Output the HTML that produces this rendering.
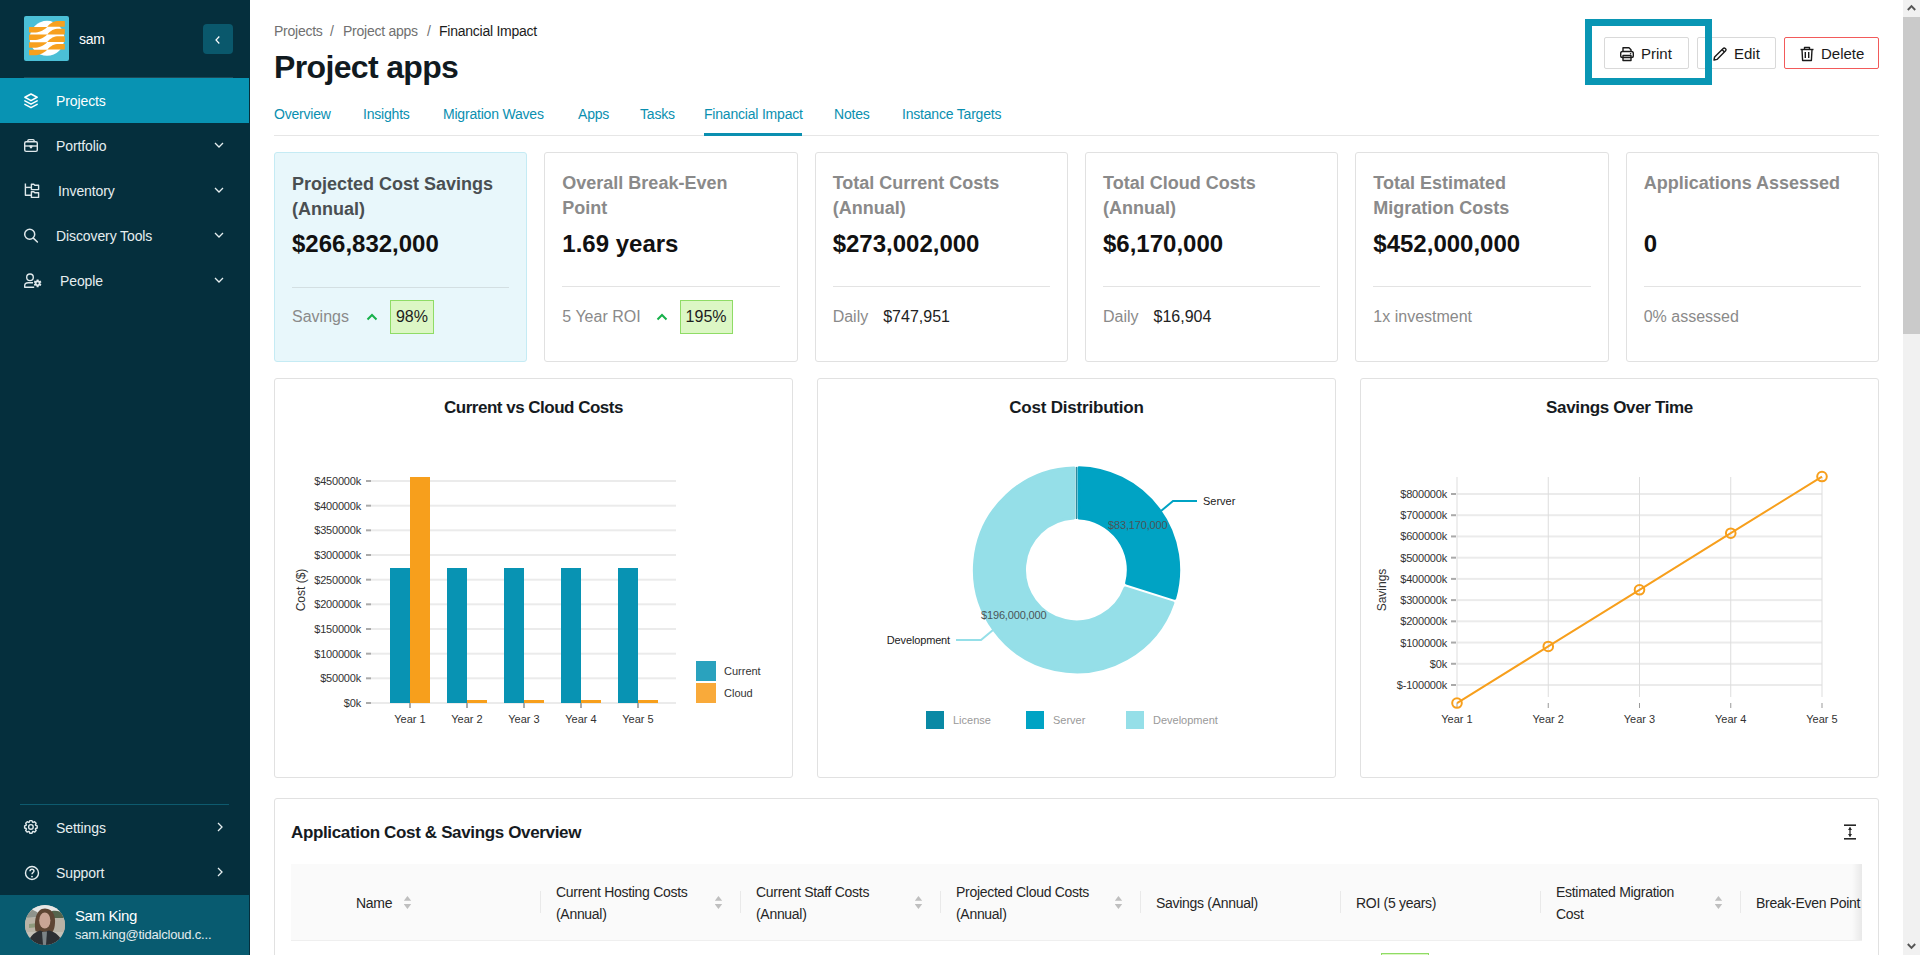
<!DOCTYPE html>
<html><head><meta charset="utf-8">
<style>
*{box-sizing:border-box;margin:0;padding:0}
html,body{width:1920px;height:955px;overflow:hidden;background:#fff;font-family:"Liberation Sans",sans-serif;color:#161b1f}
.abs{position:absolute}
#side{position:absolute;left:0;top:0;width:250px;height:955px;background:#052f3d}
.nav{position:absolute;left:0;width:249px;height:45px;color:#e6eef0;font-size:14px;letter-spacing:-0.1px}
.nav .t{position:absolute;left:56px;top:15px;white-space:nowrap}
.nav svg.ic{position:absolute;left:24px;top:15px}
.nav svg.ch{position:absolute;left:213px;top:18px}
#main{position:absolute;left:250px;top:0;width:1653px;height:955px}
.card{position:absolute;top:152px;height:210px;border:1px solid #e1e1e1;border-radius:3px;background:#fff}
.card .h{position:absolute;left:17px;top:18px;font-size:18px;font-weight:bold;color:#8a8a8a;line-height:25px}
.card .v{position:absolute;left:17px;top:76px;font-size:24px;font-weight:bold;color:#111;line-height:30px}
.card .hr{position:absolute;left:17px;right:17px;top:133px;height:1px;background:#e3e3e3}
.card .f{position:absolute;left:17px;top:147px;height:34px;display:flex;align-items:center;font-size:16px;color:#8a8a8a;white-space:nowrap}
.card .f b{font-weight:normal;color:#222}
.badge{display:inline-block;background:#dcf7c5;border:1px solid #8fdc66;color:#1d1d1d;padding:0 5px;line-height:32px}
.th{font-size:14px;line-height:22px;color:#262626;white-space:nowrap;letter-spacing:-0.3px}
.chart{position:absolute;top:378px;width:519px;height:400px;border:1px solid #e1e1e1;border-radius:3px;background:#fff}
.chart .ttl{position:absolute;left:0;right:0;top:19px;text-align:center;font-weight:bold;font-size:17px;color:#161b1f;letter-spacing:-0.5px}
#scroll{position:absolute;left:1903px;top:0;width:17px;height:955px;background:#f1f1f1}
</style></head>
<body>
<div id="side">
  <!-- logo -->
  <div class="abs" style="left:24px;top:16px;width:45px;height:45px;background:#4bbfd6;border-radius:2px;overflow:hidden">
    <svg width="45" height="45" viewBox="0 0 45 45"><ellipse cx="23" cy="22.3" rx="17.3" ry="17.5" fill="#fff"/><g fill="#f7a01e"><path d="M5 11.0 L23.2 11.0 C19 15.0 15 16.5 10 16.5 L5 16.5 Z"/><path d="M23.2 10.8 L40.8 10.8 L40.8 5.1 L35 5.1 C29.5 5.1 27 6.8 23.2 10.8 Z"/><path d="M5 18.6 L23.2 18.6 C19 22.6 15 24.1 10 24.1 L5 24.1 Z"/><path d="M23.2 18.4 L40.8 18.4 L40.8 12.7 L35 12.7 C29.5 12.7 27 14.4 23.2 18.4 Z"/><path d="M5 26.2 L23.2 26.2 C19 30.2 15 31.7 10 31.7 L5 31.7 Z"/><path d="M23.2 26.0 L40.8 26.0 L40.8 20.3 L35 20.3 C29.5 20.3 27 22.0 23.2 26.0 Z"/><path d="M5 33.8 L23.2 33.8 C19 37.8 15 39.3 10 39.3 L5 39.3 Z"/><path d="M23.2 33.6 L40.8 33.6 L40.8 27.9 L35 27.9 C29.5 27.9 27 29.6 23.2 33.6 Z"/></g></svg>
  </div>
  <div class="abs" style="left:79px;top:31px;font-size:14px;color:#fff;letter-spacing:-0.3px">sam</div>
  <div class="abs" style="left:203px;top:24px;width:30px;height:30px;border-radius:4px;background:#0a586c">
    <svg class="abs" style="left:10px;top:11px" width="10" height="10" viewBox="0 0 10 10"><path d="M6.3 1.5 L3 5 L6.3 8.5" stroke="#fff" stroke-width="1.2" fill="none"/></svg>
  </div>
  <div class="abs" style="left:24px;top:77px;width:209px;height:1px;background:#1d4a58"></div>

  <svg class="abs" style="z-index:2;left:20px;top:88px" width="24" height="24" viewBox="20 88 24 24"><g fill="none" stroke="#fff" stroke-width="1.6" stroke-linejoin="round" stroke-linecap="round"><path d="M24.9 97.3 L31 94 L37.1 97.3 L31 100.6 Z"/><path d="M24.9 100.9 L31 104.1 L37.1 100.9"/><path d="M24.9 104.4 L31 107.6 L37.1 104.4"/></g></svg>
  <div class="nav" style="top:78px;background:#0893b3;color:#fff"><span class="t">Projects</span></div>
  <svg class="abs" style="z-index:2;left:20px;top:133px" width="24" height="24" viewBox="20 133 24 24"><g fill="none" stroke="#dfe8eb" stroke-width="1.4" stroke-linejoin="round"><path d="M27.9 141.8 V140.6 C27.9 140 28.3 139.6 28.9 139.6 H33.1 C33.7 139.6 34.1 140 34.1 140.6 V141.8"/><rect x="24.7" y="141.8" width="12.6" height="9.6" rx="1.4"/><path d="M24.7 146 H37.3"/></g><path d="M29.4 145.6 H32.6 C32.6 147.6 31.8 148.4 31 148.4 C30.2 148.4 29.4 147.6 29.4 145.6 Z" fill="#dfe8eb"/></svg>
  <div class="nav" style="top:123px"><span class="t">Portfolio</span><svg class="ch" width="12" height="8" viewBox="0 0 12 8"><path d="M2 2 L6 6 L10 2" stroke="#e6eef0" stroke-width="1.3" fill="none"/></svg></div>
  <svg class="abs" style="z-index:2;left:20px;top:178px" width="24" height="24" viewBox="20 178 24 24"><g fill="none" stroke="#dfe8eb" stroke-width="1.4" stroke-linejoin="round"><path d="M25.4 183.6 V195.3 H31"/><path d="M25.4 187.4 H31"/><path d="M31.4 184.3 H33.8 L34.8 185.3 H38.6 V189.6 H31.4 Z"/><path d="M31.4 191.7 H33.8 L34.8 192.7 H38.6 V197.4 H31.4 Z"/></g></svg>
  <div class="nav" style="top:168px"><span class="t" style="left:58px">Inventory</span><svg class="ch" width="12" height="8" viewBox="0 0 12 8"><path d="M2 2 L6 6 L10 2" stroke="#e6eef0" stroke-width="1.3" fill="none"/></svg></div>
  <svg class="abs" style="z-index:2;left:20px;top:223px" width="24" height="24" viewBox="20 223 24 24"><g fill="none" stroke="#dfe8eb" stroke-width="1.5" stroke-linecap="round"><circle cx="29.7" cy="234.3" r="5"/><path d="M33.6 238.4 L37.4 242"/></g></svg>
  <div class="nav" style="top:213px"><span class="t">Discovery Tools</span><svg class="ch" width="12" height="8" viewBox="0 0 12 8"><path d="M2 2 L6 6 L10 2" stroke="#e6eef0" stroke-width="1.3" fill="none"/></svg></div>
  <svg class="abs" style="z-index:2;left:20px;top:268px" width="26" height="24" viewBox="20 268 26 24"><g fill="none" stroke="#dfe8eb" stroke-width="1.4" stroke-linejoin="round"><circle cx="30" cy="277.3" r="3.3"/><path d="M33 282.8 H28.2 C26 282.8 24.7 284.2 24.7 285.8 V287.3 H34.2"/></g><path d="M36.51 280.61 L36.63 279.42 L38.57 279.42 L38.69 280.61 L39.39 281.01 L40.48 280.52 L41.45 282.20 L40.47 282.90 L40.47 283.70 L41.45 284.40 L40.48 286.08 L39.39 285.59 L38.69 285.99 L38.57 287.18 L36.63 287.18 L36.51 285.99 L35.81 285.59 L34.72 286.08 L33.75 284.40 L34.73 283.70 L34.73 282.90 L33.75 282.20 L34.72 280.52 L35.81 281.01 Z" fill="#dfe8eb"/><circle cx="37.6" cy="283.3" r="1.1" fill="#052f3d"/></svg>
  <div class="nav" style="top:258px"><span class="t" style="left:60px">People</span><svg class="ch" width="12" height="8" viewBox="0 0 12 8"><path d="M2 2 L6 6 L10 2" stroke="#e6eef0" stroke-width="1.3" fill="none"/></svg></div>

  <div class="abs" style="left:20px;top:804px;width:209px;height:1px;background:#0d5a6e"></div>
  <svg class="abs" style="z-index:2;left:20px;top:815px" width="24" height="24" viewBox="20 815 24 24"><g fill="none" stroke="#dfe8eb" stroke-width="1.4" stroke-linejoin="round"><path d="M29.27 822.17 L29.79 820.60 L32.01 820.60 L32.53 822.17 L33.09 822.41 L34.57 821.66 L36.14 823.23 L35.39 824.71 L35.63 825.27 L37.20 825.79 L37.20 828.01 L35.63 828.53 L35.39 829.09 L36.14 830.57 L34.57 832.14 L33.09 831.39 L32.53 831.63 L32.01 833.20 L29.79 833.20 L29.27 831.63 L28.71 831.39 L27.23 832.14 L25.66 830.57 L26.41 829.09 L26.17 828.53 L24.60 828.01 L24.60 825.79 L26.17 825.27 L26.41 824.71 L25.66 823.23 L27.23 821.66 L28.71 822.41 Z"/><circle cx="30.9" cy="826.9" r="2.3"/></g></svg>
  <div class="nav" style="top:805px"><span class="t">Settings</span><svg class="ch" style="left:216px;top:16px" width="8" height="12" viewBox="0 0 8 12"><path d="M2 2 L6 6 L2 10" stroke="#e6eef0" stroke-width="1.3" fill="none"/></svg></div>
  <div class="nav" style="top:850px"><svg class="ic" width="16" height="16" viewBox="0 0 16 16"><g fill="none" stroke="#e6eef0" stroke-width="1.4"><circle cx="8" cy="8" r="6.5"/><path d="M6 6.2 C6 4.8 7 4.2 8 4.2 C9.2 4.2 10 5 10 6 C10 7.4 8 7.6 8 9.2"/></g><circle cx="8" cy="11.6" r="0.9" fill="#e6eef0"/></svg><span class="t">Support</span><svg class="ch" style="left:216px;top:16px" width="8" height="12" viewBox="0 0 8 12"><path d="M2 2 L6 6 L2 10" stroke="#e6eef0" stroke-width="1.3" fill="none"/></svg></div>

  <div class="abs" style="left:0;top:895px;width:249px;height:60px;background:#085b70">
    <svg class="abs" style="left:25px;top:10px" width="40" height="40" viewBox="0 0 40 40"><defs><clipPath id="av"><circle cx="20" cy="20" r="20"/></clipPath></defs><g clip-path="url(#av)">
<rect width="40" height="40" fill="#c4c0b6"/>
<rect width="40" height="7" fill="#e6e7e6"/>
<path d="M0 6 L6 4 L12 7 L12 12 L0 13 Z" fill="#8f948c"/>
<path d="M27 6 C31 5 35 6 40 9 L40 13 L27 13 Z" fill="#55654d"/>
<rect y="13" width="40" height="14" fill="#b9b3a6"/>
<path d="M4 19 L14 18 L14 22 L4 23 Z" fill="#8e9a7c"/>
<path d="M10.5 26 C9 17 10.5 3.5 20 3.5 C28.5 3.5 30.5 12 30 18 C29.8 22 29 25 27.5 27 L13 27 Z" fill="#5e4634"/>
<ellipse cx="19.8" cy="15.5" rx="5.6" ry="8" fill="#c9a595"/>
<path d="M14 9 C16 6 23 6 25.5 9.5 L25.5 7 C23 4.5 16 4.5 13.5 8 Z" fill="#5e4634"/>
<path d="M3 40 C4 32 8 28 15 25.5 L19 27 L24 25.5 C31 27.5 36 31 38 40 Z" fill="#2c2f33"/>
<path d="M17 27 L22 26.5 L21 40 L18 40 Z" fill="#7b8386"/>
</g></svg>
    <div class="abs" style="left:75px;top:12px;font-size:15px;color:#fff;letter-spacing:-0.4px">Sam King</div>
    <div class="abs" style="left:75px;top:32px;font-size:13px;color:#e3ecef;letter-spacing:-0.2px">sam.king@tidalcloud.c...</div>
  </div>
</div>


<div id="main">
  <div class="abs" style="left:0;top:0;font-size:14px;color:#707070;white-space:nowrap;letter-spacing:-0.25px">
    <span class="abs" style="left:24px;top:23px">Projects</span>
    <span class="abs" style="left:80px;top:23px">/</span>
    <span class="abs" style="left:93px;top:23px">Project apps</span>
    <span class="abs" style="left:177px;top:23px">/</span>
    <span class="abs" style="left:189px;top:23px;color:#1c1c1c">Financial Impact</span>
  </div>
  <div class="abs" style="left:24px;top:49px;font-size:32px;font-weight:bold;color:#111a1f;white-space:nowrap;letter-spacing:-0.65px">Project apps</div>
  <div class="abs tabs" style="left:0;top:106px;font-size:14px;color:#0a8fb0;white-space:nowrap;letter-spacing:-0.2px">
    <span class="abs" style="left:24px">Overview</span>
    <span class="abs" style="left:113px">Insights</span>
    <span class="abs" style="left:193px">Migration Waves</span>
    <span class="abs" style="left:328px">Apps</span>
    <span class="abs" style="left:390px">Tasks</span>
    <span class="abs" style="left:454px">Financial Impact</span>
    <span class="abs" style="left:584px">Notes</span>
    <span class="abs" style="left:652px">Instance Targets</span>
  </div>
  <div class="abs" style="left:24px;top:135px;width:1605px;height:1px;background:#e6e6e6"></div>
  <div class="abs" style="left:454px;top:133px;width:98px;height:3px;background:#0a8fb0"></div>

  <!-- buttons -->
    <div class="abs btn" style="left:1354px;top:37px;width:85px;height:32px;border:1px solid #d9d9d9;border-radius:2px;background:#fff">
    <svg class="abs" style="left:14px;top:8px" width="16" height="16" viewBox="0 0 16 16"><g fill="none" stroke="#1a1a1a" stroke-width="1.4" stroke-linejoin="round"><path d="M4 5.5 V1.8 H10 L12 3.8 V5.5"/><rect x="1.7" y="5.5" width="12.6" height="6" rx="1.8"/><rect x="4" y="9.5" width="8" height="5"/></g><circle cx="11.6" cy="7.8" r="0.8" fill="#1a1a1a"/></svg>
    <span class="abs" style="left:36px;top:7px;font-size:15px;color:#1a1a1a">Print</span>
  </div>
  <div class="abs btn" style="left:1447px;top:37px;width:79px;height:32px;border:1px solid #d9d9d9;border-radius:2px;background:#fff">
    <svg class="abs" style="left:14px;top:8px" width="16" height="16" viewBox="0 0 16 16"><g fill="none" stroke="#1a1a1a" stroke-width="1.4" stroke-linejoin="round"><path d="M2 14 L2.6 11 L11.2 2.4 C11.8 1.8 12.6 1.8 13.2 2.4 L13.6 2.8 C14.2 3.4 14.2 4.2 13.6 4.8 L5 13.4 Z"/><path d="M10 3.6 L12.4 6"/></g></svg>
    <span class="abs" style="left:36px;top:7px;font-size:15px;color:#1a1a1a">Edit</span>
  </div>
  <div class="abs btn" style="left:1534px;top:37px;width:95px;height:32px;border:1px solid #f25a5a;border-radius:2px;background:#fff">
    <svg class="abs" style="left:14px;top:8px" width="16" height="16" viewBox="0 0 16 16"><g fill="none" stroke="#1a1a1a" stroke-width="1.4" stroke-linejoin="round"><path d="M1.5 3.5 H14.5"/><path d="M5.5 3.5 V1.5 H10.5 V3.5"/><path d="M3 3.5 L3.6 14.5 H12.4 L13 3.5"/><path d="M6.3 6 V12"/><path d="M9.7 6 V12"/></g></svg>
    <span class="abs" style="left:36px;top:7px;font-size:15px;color:#1a1a1a">Delete</span>
  </div>

  <div class="abs"  style="left:1335px;top:19px;width:127px;height:66px;z-index:5;border:7px solid #0996b4"></div>

  <!-- cards -->
  <div class="card" style="left:24px;width:253.33px;background:#e8f7fb;border-color:#c5ebf4">
    <div class="h" style="color:#4a4f52;top:19px">Projected Cost Savings<br>(Annual)</div>
    <div class="v">$266,832,000</div>
    <div class="hr" style="background:#d3dfe2;top:134px"></div>
    <div class="f">Savings<svg style="margin:0 12px 0 17px;vertical-align:-1px" width="12" height="8" viewBox="0 0 12 8"><path d="M1.5 6.5 L6 2 L10.5 6.5" stroke="#17b14a" stroke-width="2" fill="none"/></svg><span class="badge">98%</span></div>
  </div>
  <div class="card" style="left:294.33px;width:253.33px">
    <div class="h">Overall Break-Even<br>Point</div>
    <div class="v">1.69 years</div>
    <div class="hr"></div>
    <div class="f">5 Year ROI<svg style="margin:0 12px 0 15px;vertical-align:-1px" width="12" height="8" viewBox="0 0 12 8"><path d="M1.5 6.5 L6 2 L10.5 6.5" stroke="#17b14a" stroke-width="2" fill="none"/></svg><span class="badge">195%</span></div>
  </div>
  <div class="card" style="left:564.67px;width:253.33px">
    <div class="h">Total Current Costs<br>(Annual)</div>
    <div class="v">$273,002,000</div>
    <div class="hr"></div>
    <div class="f">Daily<b style="margin-left:15px">$747,951</b></div>
  </div>
  <div class="card" style="left:835px;width:253.33px">
    <div class="h">Total Cloud Costs<br>(Annual)</div>
    <div class="v">$6,170,000</div>
    <div class="hr"></div>
    <div class="f">Daily<b style="margin-left:15px">$16,904</b></div>
  </div>
  <div class="card" style="left:1105.33px;width:253.33px">
    <div class="h">Total Estimated<br>Migration Costs</div>
    <div class="v">$452,000,000</div>
    <div class="hr"></div>
    <div class="f">1x investment</div>
  </div>
  <div class="card" style="left:1375.67px;width:253.33px">
    <div class="h">Applications Assessed</div>
    <div class="v">0</div>
    <div class="hr"></div>
    <div class="f">0% assessed</div>
  </div>

  <!-- charts -->
  <div class="chart" style="left:24px"><div class="ttl">Current vs Cloud Costs</div><svg class="abs" style="left:-1px;top:-1px" width="519" height="400" font-family="Liberation Sans, sans-serif"><rect x="97" y="324.00" width="305" height="2" fill="#ebebeb"/><rect x="92" y="324.00" width="5" height="2" fill="#aaa"/><text x="87" y="329.00" text-anchor="end" font-size="11" letter-spacing="-0.2" fill="#333">$0k</text><rect x="97" y="299.33" width="305" height="2" fill="#ebebeb"/><rect x="92" y="299.33" width="5" height="2" fill="#aaa"/><text x="87" y="304.33" text-anchor="end" font-size="11" letter-spacing="-0.2" fill="#333">$50000k</text><rect x="97" y="274.67" width="305" height="2" fill="#ebebeb"/><rect x="92" y="274.67" width="5" height="2" fill="#aaa"/><text x="87" y="279.67" text-anchor="end" font-size="11" letter-spacing="-0.2" fill="#333">$100000k</text><rect x="97" y="250.00" width="305" height="2" fill="#ebebeb"/><rect x="92" y="250.00" width="5" height="2" fill="#aaa"/><text x="87" y="255.00" text-anchor="end" font-size="11" letter-spacing="-0.2" fill="#333">$150000k</text><rect x="97" y="225.33" width="305" height="2" fill="#ebebeb"/><rect x="92" y="225.33" width="5" height="2" fill="#aaa"/><text x="87" y="230.33" text-anchor="end" font-size="11" letter-spacing="-0.2" fill="#333">$200000k</text><rect x="97" y="200.67" width="305" height="2" fill="#ebebeb"/><rect x="92" y="200.67" width="5" height="2" fill="#aaa"/><text x="87" y="205.67" text-anchor="end" font-size="11" letter-spacing="-0.2" fill="#333">$250000k</text><rect x="97" y="176.00" width="305" height="2" fill="#ebebeb"/><rect x="92" y="176.00" width="5" height="2" fill="#aaa"/><text x="87" y="181.00" text-anchor="end" font-size="11" letter-spacing="-0.2" fill="#333">$300000k</text><rect x="97" y="151.33" width="305" height="2" fill="#ebebeb"/><rect x="92" y="151.33" width="5" height="2" fill="#aaa"/><text x="87" y="156.33" text-anchor="end" font-size="11" letter-spacing="-0.2" fill="#333">$350000k</text><rect x="97" y="126.67" width="305" height="2" fill="#ebebeb"/><rect x="92" y="126.67" width="5" height="2" fill="#aaa"/><text x="87" y="131.67" text-anchor="end" font-size="11" letter-spacing="-0.2" fill="#333">$400000k</text><rect x="97" y="102.00" width="305" height="2" fill="#ebebeb"/><rect x="92" y="102.00" width="5" height="2" fill="#aaa"/><text x="87" y="107.00" text-anchor="end" font-size="11" letter-spacing="-0.2" fill="#333">$450000k</text><rect x="116" y="190" width="20" height="135" fill="#0893b3"/><rect x="136" y="99" width="20" height="226" fill="#f79f1c"/><rect x="135" y="325" width="2" height="5" fill="#aaa"/><text x="136" y="345" text-anchor="middle" font-size="11" fill="#333">Year 1</text><rect x="173" y="190" width="20" height="135" fill="#0893b3"/><rect x="193" y="322" width="20" height="3" fill="#f79f1c"/><rect x="192" y="325" width="2" height="5" fill="#aaa"/><text x="193" y="345" text-anchor="middle" font-size="11" fill="#333">Year 2</text><rect x="230" y="190" width="20" height="135" fill="#0893b3"/><rect x="250" y="322" width="20" height="3" fill="#f79f1c"/><rect x="249" y="325" width="2" height="5" fill="#aaa"/><text x="250" y="345" text-anchor="middle" font-size="11" fill="#333">Year 3</text><rect x="287" y="190" width="20" height="135" fill="#0893b3"/><rect x="307" y="322" width="20" height="3" fill="#f79f1c"/><rect x="306" y="325" width="2" height="5" fill="#aaa"/><text x="307" y="345" text-anchor="middle" font-size="11" fill="#333">Year 4</text><rect x="344" y="190" width="20" height="135" fill="#0893b3"/><rect x="364" y="322" width="20" height="3" fill="#f79f1c"/><rect x="363" y="325" width="2" height="5" fill="#aaa"/><text x="364" y="345" text-anchor="middle" font-size="11" fill="#333">Year 5</text><rect x="422" y="283" width="20" height="20" fill="#2aa2be"/><rect x="422" y="305" width="20" height="20" fill="#f9aa3a"/><text x="450" y="297" font-size="11" fill="#333">Current</text><text x="450" y="319" font-size="11" fill="#333">Cloud</text><text transform="translate(31,212) rotate(-90)" text-anchor="middle" font-size="12" fill="#333">Cost ($)</text></svg></div>
  <div class="chart" style="left:567px"><div class="ttl" style="letter-spacing:-0.2px">Cost Distribution</div><svg class="abs" style="left:-1px;top:-1px" width="519" height="400" font-family="Liberation Sans, sans-serif"><path d="M261.86 89.63 A102.3 102.3 0 0 1 357.68 220.30 L309.61 205.03 A51.9 51.9 0 0 0 261.97 140.06 Z" fill="#00a3c4" stroke="#00a3c4" stroke-width="3.0" stroke-linejoin="round"/><path d="M355.91 224.91 A102.0 102.0 0 1 1 256.94 89.93 L256.83 140.06 A51.9 51.9 0 1 0 308.06 209.94 Z" fill="#95dfe8" stroke="#95dfe8" stroke-width="3.0" stroke-linejoin="round"/><rect x="258.80" y="88.90" width="1.2" height="52.10" fill="#2f8a9c"/><polyline points="344,133 356,123 380,123" fill="none" stroke="#00a3c4" stroke-width="2"/><text x="386" y="127" font-size="11" fill="#222">Server</text><polyline points="176,252 164,262 139,262" fill="none" stroke="#95dfe8" stroke-width="2"/><text x="133" y="266" text-anchor="end" font-size="11" letter-spacing="-0.15" fill="#222">Development</text><text x="291" y="151" font-size="11" letter-spacing="-0.15" fill="#4a5558">$83,170,000</text><text x="164" y="241" font-size="11" letter-spacing="-0.15" fill="#4a5558">$196,000,000</text><rect x="109" y="333" width="18" height="18" fill="#0a89a5"/><text x="136" y="346" font-size="11" fill="#999">License</text><rect x="209" y="333" width="18" height="18" fill="#00a3c4"/><text x="236" y="346" font-size="11" fill="#999">Server</text><rect x="309" y="333" width="18" height="18" fill="#95dfe8"/><text x="336" y="346" font-size="11" fill="#999">Development</text></svg></div>
  <div class="chart" style="left:1110px"><div class="ttl" style="letter-spacing:-0.35px">Savings Over Time</div><svg class="abs" style="left:-1px;top:-1px" width="519" height="400" font-family="Liberation Sans, sans-serif"><rect x="97" y="306.00" width="365" height="2" fill="#ebebeb"/><rect x="91" y="306.00" width="5" height="2" fill="#aaa"/><text x="87" y="311.00" text-anchor="end" font-size="11" letter-spacing="-0.2" fill="#333">$-100000k</text><rect x="97" y="284.78" width="365" height="2" fill="#ebebeb"/><rect x="91" y="284.78" width="5" height="2" fill="#aaa"/><text x="87" y="289.78" text-anchor="end" font-size="11" letter-spacing="-0.2" fill="#333">$0k</text><rect x="97" y="263.56" width="365" height="2" fill="#ebebeb"/><rect x="91" y="263.56" width="5" height="2" fill="#aaa"/><text x="87" y="268.56" text-anchor="end" font-size="11" letter-spacing="-0.2" fill="#333">$100000k</text><rect x="97" y="242.33" width="365" height="2" fill="#ebebeb"/><rect x="91" y="242.33" width="5" height="2" fill="#aaa"/><text x="87" y="247.33" text-anchor="end" font-size="11" letter-spacing="-0.2" fill="#333">$200000k</text><rect x="97" y="221.11" width="365" height="2" fill="#ebebeb"/><rect x="91" y="221.11" width="5" height="2" fill="#aaa"/><text x="87" y="226.11" text-anchor="end" font-size="11" letter-spacing="-0.2" fill="#333">$300000k</text><rect x="97" y="199.89" width="365" height="2" fill="#ebebeb"/><rect x="91" y="199.89" width="5" height="2" fill="#aaa"/><text x="87" y="204.89" text-anchor="end" font-size="11" letter-spacing="-0.2" fill="#333">$400000k</text><rect x="97" y="178.67" width="365" height="2" fill="#ebebeb"/><rect x="91" y="178.67" width="5" height="2" fill="#aaa"/><text x="87" y="183.67" text-anchor="end" font-size="11" letter-spacing="-0.2" fill="#333">$500000k</text><rect x="97" y="157.44" width="365" height="2" fill="#ebebeb"/><rect x="91" y="157.44" width="5" height="2" fill="#aaa"/><text x="87" y="162.44" text-anchor="end" font-size="11" letter-spacing="-0.2" fill="#333">$600000k</text><rect x="97" y="136.22" width="365" height="2" fill="#ebebeb"/><rect x="91" y="136.22" width="5" height="2" fill="#aaa"/><text x="87" y="141.22" text-anchor="end" font-size="11" letter-spacing="-0.2" fill="#333">$700000k</text><rect x="97" y="115.00" width="365" height="2" fill="#ebebeb"/><rect x="91" y="115.00" width="5" height="2" fill="#aaa"/><text x="87" y="120.00" text-anchor="end" font-size="11" letter-spacing="-0.2" fill="#333">$800000k</text><rect x="96.50" y="99" width="1" height="220" fill="#ddd"/><rect x="96.50" y="325" width="1" height="5" fill="#999"/><text x="97.00" y="345" text-anchor="middle" font-size="11" fill="#333">Year 1</text><rect x="187.75" y="99" width="1" height="220" fill="#ddd"/><rect x="187.75" y="325" width="1" height="5" fill="#999"/><text x="188.25" y="345" text-anchor="middle" font-size="11" fill="#333">Year 2</text><rect x="279.00" y="99" width="1" height="220" fill="#ddd"/><rect x="279.00" y="325" width="1" height="5" fill="#999"/><text x="279.50" y="345" text-anchor="middle" font-size="11" fill="#333">Year 3</text><rect x="370.25" y="99" width="1" height="220" fill="#ddd"/><rect x="370.25" y="325" width="1" height="5" fill="#999"/><text x="370.75" y="345" text-anchor="middle" font-size="11" fill="#333">Year 4</text><rect x="461.50" y="99" width="1" height="220" fill="#ddd"/><rect x="461.50" y="325" width="1" height="5" fill="#999"/><text x="462.00" y="345" text-anchor="middle" font-size="11" fill="#333">Year 5</text><polyline points="97.00,325.07 188.25,268.45 279.50,211.82 370.75,155.19 462.00,98.56" fill="none" stroke="#f79f1c" stroke-width="2"/><circle cx="97.00" cy="325.07" r="4.8" fill="none" stroke="#f79f1c" stroke-width="2"/><circle cx="188.25" cy="268.45" r="4.8" fill="none" stroke="#f79f1c" stroke-width="2"/><circle cx="279.50" cy="211.82" r="4.8" fill="none" stroke="#f79f1c" stroke-width="2"/><circle cx="370.75" cy="155.19" r="4.8" fill="none" stroke="#f79f1c" stroke-width="2"/><circle cx="462.00" cy="98.56" r="4.8" fill="none" stroke="#f79f1c" stroke-width="2"/><text transform="translate(26,212) rotate(-90)" text-anchor="middle" font-size="12" fill="#333">Savings</text></svg></div>

  <!-- table -->
  <div class="abs" style="left:24px;top:798px;width:1605px;height:200px;border:1px solid #e1e1e1;border-radius:3px;background:#fff">
    <div class="abs" style="left:16px;top:24px;font-size:17px;font-weight:bold;color:#161b1f;letter-spacing:-0.35px">Application Cost &amp; Savings Overview</div>

    <div class="abs" style="left:16px;top:65px;width:1571px;height:77px;background:#fafafa;border-bottom:1px solid #efefef;overflow:hidden">
      <div class="abs th" style="left:65px;top:28px">Name</div>
      <svg class="abs" style="left:113px;top:32px" width="8" height="13" viewBox="0.3 0 8 13"><path d="M3.75 0 L7.5 4.8 H0 Z M3.75 13 L7.5 8 H0 Z" fill="#bfbfbf"/></svg>
      <div class="abs" style="left:249px;top:27px;width:1px;height:22px;background:#e9e9e9"></div>
      <div class="abs th" style="left:265px;top:17px">Current Hosting Costs<br>(Annual)</div>
      <svg class="abs" style="left:424px;top:32px" width="8" height="13" viewBox="0.3 0 8 13"><path d="M3.75 0 L7.5 4.8 H0 Z M3.75 13 L7.5 8 H0 Z" fill="#bfbfbf"/></svg>
      <div class="abs" style="left:449px;top:27px;width:1px;height:22px;background:#e9e9e9"></div>
      <div class="abs th" style="left:465px;top:17px">Current Staff Costs<br>(Annual)</div>
      <svg class="abs" style="left:624px;top:32px" width="8" height="13" viewBox="0.3 0 8 13"><path d="M3.75 0 L7.5 4.8 H0 Z M3.75 13 L7.5 8 H0 Z" fill="#bfbfbf"/></svg>
      <div class="abs" style="left:649px;top:27px;width:1px;height:22px;background:#e9e9e9"></div>
      <div class="abs th" style="left:665px;top:17px">Projected Cloud Costs<br>(Annual)</div>
      <svg class="abs" style="left:824px;top:32px" width="8" height="13" viewBox="0.3 0 8 13"><path d="M3.75 0 L7.5 4.8 H0 Z M3.75 13 L7.5 8 H0 Z" fill="#bfbfbf"/></svg>
      <div class="abs" style="left:849px;top:27px;width:1px;height:22px;background:#e9e9e9"></div>
      <div class="abs th" style="left:865px;top:28px">Savings (Annual)</div>
      <div class="abs" style="left:1049px;top:27px;width:1px;height:22px;background:#e9e9e9"></div>
      <div class="abs th" style="left:1065px;top:28px">ROI (5 years)</div>
      <div class="abs" style="left:1249px;top:27px;width:1px;height:22px;background:#e9e9e9"></div>
      <div class="abs th" style="left:1265px;top:17px">Estimated Migration<br>Cost</div>
      <svg class="abs" style="left:1424px;top:32px" width="8" height="13" viewBox="0.3 0 8 13"><path d="M3.75 0 L7.5 4.8 H0 Z M3.75 13 L7.5 8 H0 Z" fill="#bfbfbf"/></svg>
      <div class="abs" style="left:1449px;top:27px;width:1px;height:22px;background:#e9e9e9"></div>
      <div class="abs th" style="left:1465px;top:28px">Break-Even Point</div>
      <div class="abs" style="left:1561px;top:0;width:10px;height:77px;background:linear-gradient(to right,rgba(0,0,0,0),rgba(0,0,0,0.07))"></div>
    </div>
    <div class="abs" style="left:1106px;top:154px;width:48px;height:10px;border:1px solid #8fdc66;background:#dcf7c5"></div>
    <svg class="abs" style="left:1568px;top:25px" width="14" height="16" viewBox="0 0 14 16"><g stroke="#262626" fill="none"><path d="M1 1.2 H13" stroke-width="1.6"/><path d="M1 14.8 H13" stroke-width="1.6"/><path d="M7 3.5 V12.5" stroke-width="1.3"/></g><path d="M7 3 L9 6 H5 Z M7 13 L9 10 H5 Z" fill="#262626"/></svg>
  </div>
</div>

<div id="scroll">
  <div class="abs" style="left:0;top:17px;width:17px;height:317px;background:#cacaca"></div>
  <svg class="abs" style="left:3px;top:3px" width="11" height="9" viewBox="0 0 11 9"><path d="M1.8 7 L5.5 3.2 L9.2 7" stroke="#555" stroke-width="1.9" fill="none"/></svg>
  <svg class="abs" style="left:3px;top:942px" width="11" height="9" viewBox="0 0 11 9"><path d="M1.8 2 L5.5 5.8 L9.2 2" stroke="#555" stroke-width="1.9" fill="none"/></svg>
</div>
</body></html>
